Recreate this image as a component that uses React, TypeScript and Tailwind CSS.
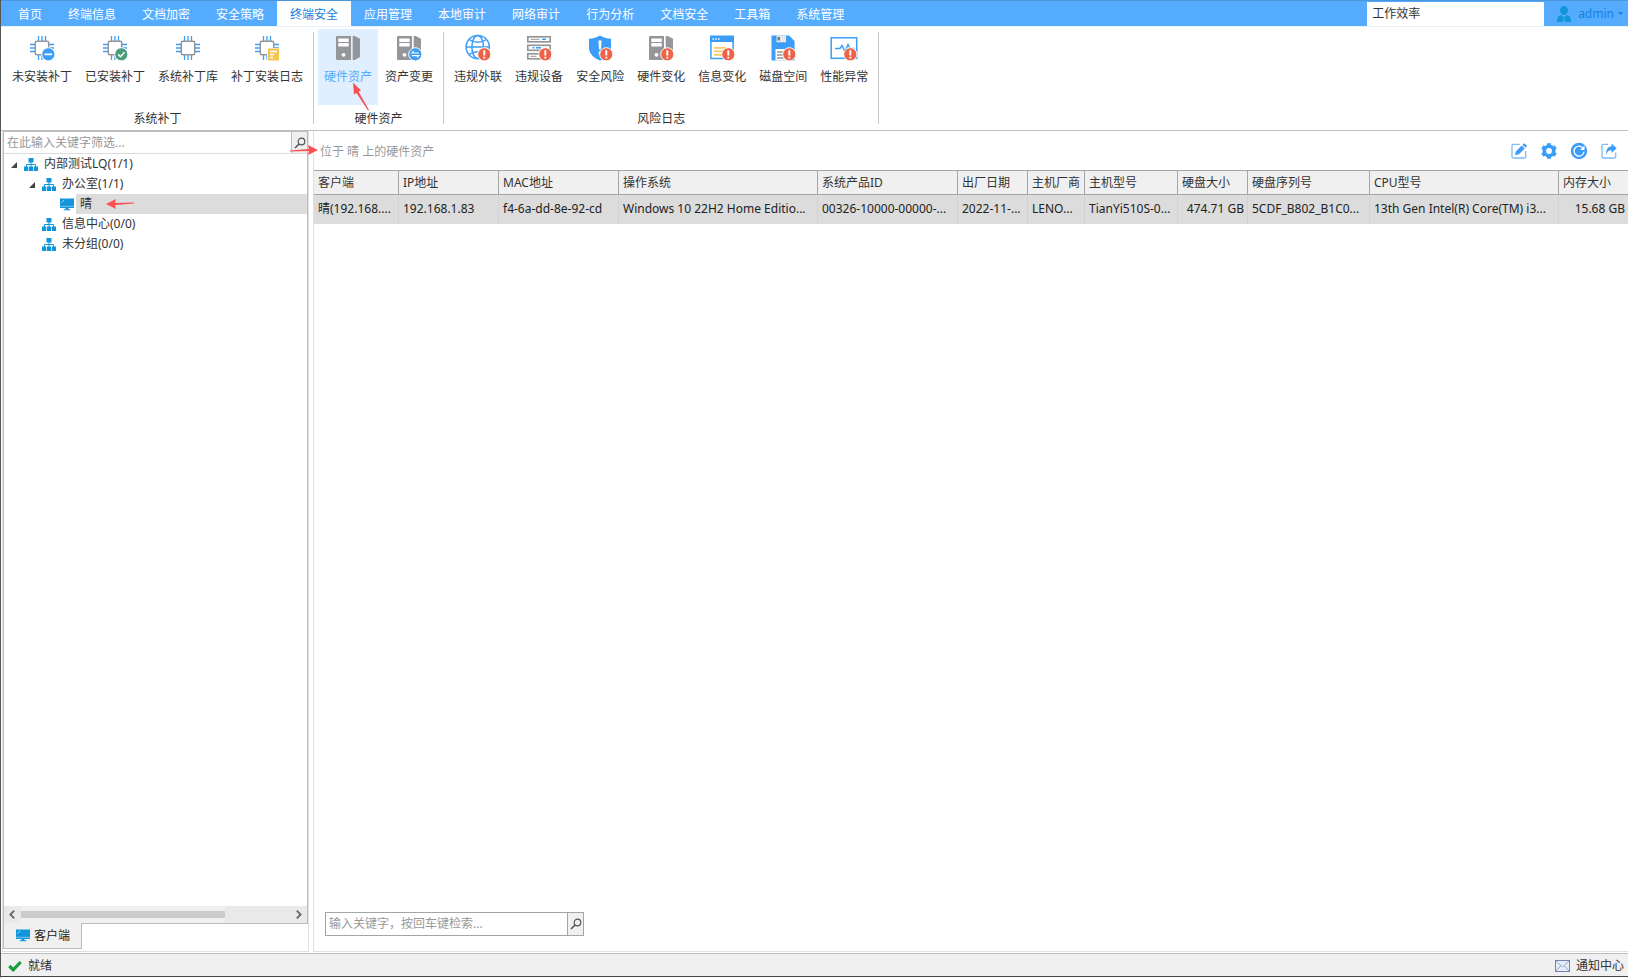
import type { ReactNode } from "react";

const BLUE = "#3b9df8";
const GRAY = "#949699";
const RED = "#ee6348";

type Badge = "minus" | "check" | "note" | "swap" | "alert";

const BadgeMark = ({ kind }: { kind?: Badge }) => {
  if (!kind) return null;

  if (kind === "note") {
    return (
      <g>
        <rect x="12" y="12" width="12" height="12.5" fill="#fff" />
        <rect x="13" y="12.5" width="11" height="12" fill="#f5c451" />
        <path d="M15 15.5h7M15 18.5h4M15 21.5h3" stroke="#fff" strokeWidth="1.3" />
      </g>
    );
  }

  const colors = { minus: BLUE, check: "#4b9c7b", swap: BLUE, alert: RED };

  return (
    <g fill="none" stroke="#fff">
      <circle cx="18.3" cy="18.3" r="6.6" fill={colors[kind]} strokeWidth="1" />
      {kind === "minus" && <path d="M14.5 18.3h7.6" strokeWidth="1.8" />}
      {kind === "check" && <path d="m15.2 18.4 2.3 2.3 4-4.4" strokeWidth="1.5" />}
      {kind === "swap" && (
        <path d="M22 17h-7l1.8-1.8M14.8 19.6h7l-1.8 1.8" strokeWidth="1.2" />
      )}
      {kind === "alert" && (
        <path d="M18.3 14.2v5.2M18.3 20.8v1.8" strokeWidth="1.9" />
      )}
    </g>
  );
};

const RibbonIcon = ({ badge, children }: { badge?: Badge; children: ReactNode }) => (
  <svg className="size-6 overflow-visible" viewBox="0 0 24 24" aria-hidden="true">
    {children}
    <BadgeMark kind={badge} />
  </svg>
);

const Chip = () => (
  <g fill="none">
    <path
      d="M8.5 0v5M12 0v5M15.5 0v5M8.5 19v5M12 19v5M15.5 19v5M0 8.5h5M0 12h5M0 15.5h5M19 8.5h5M19 12h5M19 15.5h5"
      stroke={BLUE}
      strokeWidth="1.3"
    />
    <rect x="5.3" y="5.3" width="13.4" height="13.4" rx="1.5" fill="#fff" stroke={GRAY} strokeWidth="1.5" />
  </g>
);

const Tower = () => (
  <g>
    <path d="M1 0h14v24H1a1 1 0 0 1-1-1V1a1 1 0 0 1 1-1Z" fill={GRAY} />
    <path d="M16.7 0h2L24 2.7V21l-5.3 3h-2Z" fill={GRAY} />
    <path d="M2.3 2.6h10.4v3.3H2.3zM2.3 7h10.4v3.4H2.3z" fill="#fff" />
    <circle cx="7.5" cy="18.8" r="1.9" fill="#fff" />
  </g>
);

const Globe = () => (
  <g fill="none" stroke={BLUE} strokeWidth="1.5">
    <circle cx="11.7" cy="11" r="11.6" />
    <ellipse cx="11.7" cy="11" rx="5.8" ry="11.6" />
    <path d="M.2 11h23M3 3.5c5 3.6 12.5 3.6 17.5 0M3 18.5c5-3.6 12.5-3.6 17.5 0" />
  </g>
);

const Servers = () => (
  <g>
    <g fill="#fff" stroke={GRAY} strokeWidth="1.7">
      <rect x=".8" y=".8" width="22.4" height="5" />
      <rect x=".8" y="9.3" width="22.4" height="5" />
      <rect x=".8" y="17.8" width="22.4" height="5" />
    </g>
    <path d="M15 3.3h4M5.5 11.8h2M9 11.8h5" stroke={BLUE} strokeWidth="1.4" />
    <path d="M3.5 3.3h9M3.5 20.3h6" stroke={GRAY} strokeWidth="1" />
  </g>
);

const Shield = () => (
  <g>
    <path d="M12-.6c3 2 6.5 3.2 11 3.4v9c0 6-5 10.5-11 12.7C6 22.3 1 17.8 1 11.8v-9C5.5 2.6 9 1.4 12-.6Z" fill={BLUE} />
    <path d="M10.4 4.5h3.2l-.6 9h-2zM10.7 15.5h2.6V18h-2.6z" fill="#fff" />
  </g>
);

const InfoWindow = () => (
  <g>
    <path d="M.9 6v16.6h22.2V6" fill="#fff" stroke={BLUE} strokeWidth="1.5" />
    <path d="M0-.5h24V6H0z" fill={BLUE} />
    <path d="M2.5 3H4M5.3 3h1.5M8 3h1.5" stroke="#fff" strokeWidth="1.5" />
    <path d="M4 11.8h12M4 15.3h9M4 18.8h9" stroke="#f8c865" strokeWidth="1.8" />
  </g>
);

const Floppy = () => (
  <g>
    <path d="M.5-.5H18L23.500 5v19.500H.5z" fill={BLUE} />
    <path d="M5.5-.5H15v6.8H5.500z" fill="#e8e9ea" />
    <path d="M6.500 1h2.500v3.500H6.500z" fill="#777" />
    <path d="M4.5 13h15v11.5h-15z" fill="#fff" />
    <path d="M6 16h9M6 19h8M6 22h8" stroke={GRAY} strokeWidth="1.3" />
  </g>
);

const Pulse = () => (
  <g fill="none" stroke={BLUE}>
    <rect x="-.8" y="1.8" width="25.5" height="20.5" strokeWidth="1.5" />
    <path d="M3 12.5h5l2-3 3 6 3-7 2 4h4.500" strokeWidth="1.5" />
  </g>
);

type RibbonItem = { label: string; art: ReactNode; badge?: Badge; active?: boolean };

const ribbonGroups: { name: string; items: RibbonItem[] }[] = [
  {
    name: "系统补丁",
    items: [
      { label: "未安装补丁", art: <Chip />, badge: "minus" },
      { label: "已安装补丁", art: <Chip />, badge: "check" },
      { label: "系统补丁库", art: <Chip /> },
      { label: "补丁安装日志", art: <Chip />, badge: "note" },
    ],
  },
  {
    name: "硬件资产",
    items: [
      { label: "硬件资产", art: <Tower />, active: true },
      { label: "资产变更", art: <Tower />, badge: "swap" },
    ],
  },
  {
    name: "风险日志",
    items: [
      { label: "违规外联", art: <Globe />, badge: "alert" },
      { label: "违规设备", art: <Servers />, badge: "alert" },
      { label: "安全风险", art: <Shield />, badge: "alert" },
      { label: "硬件变化", art: <Tower />, badge: "alert" },
      { label: "信息变化", art: <InfoWindow />, badge: "alert" },
      { label: "磁盘空间", art: <Floppy />, badge: "alert" },
      { label: "性能异常", art: <Pulse />, badge: "alert" },
    ],
  },
];

const menus = [
  "首页",
  "终端信息",
  "文档加密",
  "安全策略",
  "终端安全",
  "应用管理",
  "本地审计",
  "网络审计",
  "行为分析",
  "文档安全",
  "工具箱",
  "系统管理",
];

const TopBar = () => (
  <header className="flex h-[26px] shrink-0 border-t border-[#4a95dc] bg-[#55acff]">
    <nav className="flex pl-1">
      {menus.map((menu) => (
        <button
          key={menu}
          className={
            menu === "终端安全"
              ? "bg-white px-[13px] pt-0.5 text-[#1480e0]"
              : "px-[13px] pt-0.5 text-white"
          }
        >
          {menu}
        </button>
      ))}
    </nav>
    <input
      className="mt-px ml-auto w-[177px] bg-white px-[5px] text-[#333] outline-none"
      aria-label="功能搜索"
      defaultValue="工作效率"
    />
    <button className="flex items-center pr-[5px] pl-[13px] text-[#1480e6]">
      <svg className="mr-[7px] h-4 w-3.5" viewBox="0 0 14 16" fill="#1296db" aria-hidden="true">
        <path d="M7 0c2.4 0 4 1.7 4 4.2S9.2 9 7 9 3 6.7 3 4.2 4.6 0 7 0Z" />
        <path d="M3.5 9 6 10.5V16H1.2C.4 16 0 15.6 0 15c0-3 .8-5 3.5-6ZM10.5 9 8 10.5V16h4.8c.8 0 1.2-.4 1.2-1 0-3-.8-5-3.5-6ZM6.4 10.5h1.2v4L7 15.5l-.6-1z" />
      </svg>
      admin
      <svg className="ml-1 h-[3px] w-[5px]" viewBox="0 0 5 3" aria-hidden="true">
        <path d="M0 0h5L2.5 3z" fill="#1480e6" />
      </svg>
    </button>
  </header>
);

const Ribbon = () => (
  <div className="flex shrink-0 border-y border-t-[#e8f1fa] border-b-[#c0c0c0] bg-white pl-px">
    {ribbonGroups.map((group) => (
      <section key={group.name} className="flex py-0.5">
        <div className="relative flex flex-col px-1">
          <div className="flex h-[76px] gap-px">
            {group.items.map((item) => (
              <button
                key={item.label}
                className={
                  item.active
                    ? "flex flex-col items-center bg-[#e1eefe] px-1.5 pt-[7px] text-[#55acff]"
                    : "flex flex-col items-center px-1.5 pt-[7px]"
                }
              >
                <RibbonIcon badge={item.badge}>{item.art}</RibbonIcon>
                <span className="mt-2 leading-[18px]">{item.label}</span>
              </button>
            ))}
          </div>
          <h2 className="mt-[5px] h-[18px] text-center leading-[18px]">{group.name}</h2>
          {group.name === "硬件资产" && (
            <svg className="absolute top-[52px] left-[35px] h-8 w-5" viewBox="0 0 20 32" aria-hidden="true">
              <path d="M4 1.500 12 9.500 9.500 10.500 20 29 19 29.500 7.500 12 5 13.500z" fill="#fb4f4f" />
            </svg>
          )}
        </div>
        <div className="mt-[3px] mb-1 w-px bg-[#c9c9c9]" />
      </section>
    ))}
  </div>
);

const OrgIcon = () => (
  <svg className="h-[13px] w-3.5" viewBox="0 0 14 13" aria-hidden="true">
    <path d="M7 4v5M2.5 9V6.500h9V9" fill="none" stroke="#1296db" />
    <path d="M4.500 0h5v4.500h-5zM0 8.500h4.200V13H0zM4.900 8.500h4.200V13H4.900zM9.800 8.500H14V13H9.800z" fill="#1296db" />
  </svg>
);

const MonitorIcon = () => (
  <svg className="h-[13px] w-3.5" viewBox="0 0 14 13" aria-hidden="true">
    <path d="M0 .5h14V10H0zM5.500 10h3v1.300h1.800v1H3.700v-1h1.800z" fill="#1296db" />
    <path d="M0 8.300h14" stroke="#8fd0f3" strokeWidth=".8" />
    <path d="m1.300 4.600 3-2.800" stroke="#a8dbf6" strokeWidth=".9" />
  </svg>
);

const SearchIcon = () => (
  <svg className="size-3" viewBox="0 0 12 12" fill="none" stroke="#555" aria-hidden="true">
    <circle cx="7.500" cy="4.500" r="3.300" strokeWidth="1.200" />
    <path d="M5 7 1 11" strokeWidth="1.600" />
  </svg>
);

const ArrowMark = ({ className }: { className: string }) => (
  <svg className={className} viewBox="0 0 28 10" aria-hidden="true">
    <path d="M0 5 10 0 9 3.900 28 3.500v1L9 6.100 10 10z" fill="#fb4f4f" />
  </svg>
);

type TreeNode = { label: string; indent: string; open?: boolean; client?: boolean };

const tree: TreeNode[] = [
  { label: "内部测试LQ(1/1)", indent: "pl-[7px]", open: true },
  { label: "办公室(1/1)", indent: "pl-[25px]", open: true },
  { label: "晴", indent: "pl-[43px]", client: true },
  { label: "信息中心(0/0)", indent: "pl-[25px]" },
  { label: "未分组(0/0)", indent: "pl-[25px]" },
];

const Sidebar = () => (
  <aside className="flex w-[307px] shrink-0 flex-col border border-t-0 border-[#e0e0e0] pb-0.5">
    <div className="flex min-h-0 flex-1 flex-col border border-[#bcbcbc]">
      <div className="flex h-[22px] shrink-0 border-b border-[#dcdcdc]">
        <input
          className="min-w-0 flex-1 px-[3px] placeholder-[#999] outline-none"
          aria-label="筛选"
          placeholder="在此输入关键字筛选..."
        />
        <button
          className="relative flex w-4 items-center justify-center border-l border-[#bcbcbc] bg-[#f0f0f0]"
          aria-label="搜索"
        >
          <SearchIcon />
          <ArrowMark className="absolute top-[13px] -left-0.5 z-10 h-2.5 w-7 rotate-180" />
        </button>
      </div>
      <ul className="flex-1">
        {tree.map((node) => (
          <li key={node.label} className={`flex h-5 items-center ${node.indent}`}>
            <span className="flex w-[13px]">
              {node.open && (
                <svg className="mt-0.5 size-1.5" viewBox="0 0 6 6" aria-hidden="true">
                  <path d="M6 0v6H0z" fill="#444" />
                </svg>
              )}
            </span>
            {node.client ? <MonitorIcon /> : <OrgIcon />}
            <span
              className={
                node.client
                  ? "ml-0.5 flex h-5 flex-1 items-center bg-[#dcdcdc] pl-1"
                  : "ml-0.5 flex h-5 flex-1 items-center pl-1"
              }
            >
              {node.label}
              {node.client && <ArrowMark className="ml-3.5 h-2.5 w-7" />}
            </span>
          </li>
        ))}
      </ul>
      <div className="flex h-[17px] shrink-0 items-center bg-[#e9e9e9]">
        <button className="flex w-[17px] justify-center pr-0.5" aria-label="向左滚动">
          <svg className="h-[9px] w-1.5" viewBox="0 0 6 9" fill="none" stroke="#666" aria-hidden="true">
            <path d="M5.200.7 1.400 4.500l3.800 3.800" strokeWidth="1.800" />
          </svg>
        </button>
        <div className="flex h-full flex-1 items-center">
          <div className="flex h-full w-[76%] items-center bg-[#f0f0f0]">
            <div className="h-[7px] w-full bg-[#cbcbcb]" />
          </div>
        </div>
        <button className="flex w-[17px] justify-center" aria-label="向右滚动">
          <svg className="h-[9px] w-1.5" viewBox="0 0 6 9" fill="none" stroke="#666" aria-hidden="true">
            <path d="M.8.7 4.600 4.500.8 8.300" strokeWidth="1.800" />
          </svg>
        </button>
      </div>
    </div>
    <button className="-mt-px flex h-[26px] w-[79px] shrink-0 items-center gap-1 border border-t-0 border-[#bcbcbc] bg-[#f0f0f0] pl-3 text-[#222]">
      <MonitorIcon />
      客户端
    </button>
  </aside>
);

const columns = [
  { title: "客户端", value: "晴(192.168....", width: "w-[85px]" },
  { title: "IP地址", value: "192.168.1.83", width: "w-[100px]" },
  { title: "MAC地址", value: "f4-6a-dd-8e-92-cd", width: "w-[120px]" },
  { title: "操作系统", value: "Windows 10 22H2 Home Editio...", width: "w-[199px]" },
  { title: "系统产品ID", value: "00326-10000-00000-...", width: "w-[140px]" },
  { title: "出厂日期", value: "2022-11-...", width: "w-[70px]" },
  { title: "主机厂商", value: "LENO...", width: "w-[57px]" },
  { title: "主机型号", value: "TianYi510S-0...", width: "w-[93px]" },
  { title: "硬盘大小", value: "474.71 GB", width: "w-[70px]", right: true },
  { title: "硬盘序列号", value: "5CDF_B802_B1C0...", width: "w-[122px]" },
  { title: "CPU型号", value: "13th Gen Intel(R) Core(TM) i3...", width: "w-[189px]" },
  { title: "内存大小", value: "15.68 GB", width: "", right: true },
];

const AssetTable = () => (
  <table className="w-full table-fixed border-separate border-spacing-0 whitespace-nowrap">
    <colgroup>
      {columns.map((column) => (
        <col key={column.title} className={column.width} />
      ))}
    </colgroup>
    <thead>
      <tr className="h-[25px] bg-[#f0f0f0]">
        {columns.map((column) => (
          <th
            key={column.title}
            className="overflow-hidden border-y border-r border-[#a5a5a5] py-0 pr-0 pl-1 text-left font-normal last:border-r-0"
          >
            {column.title}
          </th>
        ))}
      </tr>
    </thead>
    <tbody>
      <tr className="h-[29px] bg-[#dcdcdc] text-[#222]">
        {columns.map((column) => (
          <td
            key={column.title}
            className={
              column.right
                ? "overflow-hidden border-r border-[#d2d2d2] pt-0 pr-[3px] pb-0.5 pl-0 text-right last:border-r-0"
                : "overflow-hidden border-r border-[#d2d2d2] pt-0 pr-0 pb-0.5 pl-1"
            }
          >
            {column.value}
          </td>
        ))}
      </tr>
    </tbody>
  </table>
);

const tools = [
  {
    name: "编辑",
    art: (
      <g>
        <path d="M9 1.300H2.200A1.200 1.200 0 0 0 1 2.500v11.300A1.200 1.200 0 0 0 2.200 15h11.300a1.200 1.200 0 0 0 1.200-1.200V8" fill="none" stroke="#7cbcf9" strokeWidth="1.300" />
        <path d="M4 12.300 5 8.200 10.700 2.500l3 3L8 11.300zM11.500 1.700l.9-.9q.8-.6 1.600 0l1.400 1.400q.6.800 0 1.600l-.9.900z" fill={BLUE} />
      </g>
    ),
  },
  {
    name: "设置",
    art: (
      <g>
        <circle cx="8" cy="8" r="4.700" fill="none" stroke={BLUE} strokeWidth="3.600" />
        <path
          d="M8 .2v2.500M8 13.300v2.500M1.300 4.100l2.100 1.200M12.600 10.700l2.100 1.200M1.300 11.900l2.100-1.200M12.600 5.300l2.100-1.200"
          stroke={BLUE}
          strokeWidth="4"
        />
      </g>
    ),
  },
  {
    name: "刷新",
    art: (
      <g>
        <circle cx="8" cy="8" r="8.200" fill={BLUE} />
        <path d="M12.400 5.700A5 5 0 1 0 13 8.700" fill="none" stroke="#fff" strokeWidth="1.300" />
        <path d="M13.500 2.500v4.600H9z" fill="#fff" />
      </g>
    ),
  },
  {
    name: "导出",
    art: (
      <g>
        <path d="M7 1.300H2.200A1.200 1.200 0 0 0 1 2.500v11.300A1.200 1.200 0 0 0 2.200 15h11.300a1.200 1.200 0 0 0 1.200-1.200V9.500" fill="none" stroke="#7cbcf9" strokeWidth="1.300" />
        <path d="M10.500.5 15.700 5.200 10.500 10V7.200C8 7 6.300 8.500 5.200 11.500 5 6.500 7 3.500 10.500 3.300z" fill={BLUE} />
      </g>
    ),
  },
];

const Content = () => (
  <main className="flex min-w-0 flex-1 flex-col border-b border-l border-[#e0e0e0]">
    <div className="flex h-[39px] shrink-0 items-center justify-between pr-[11px] pl-1.5">
      <h1 className="pt-0.5 text-[#999]">位于 晴 上的硬件资产</h1>
      <div className="flex gap-3.5">
        {tools.map((tool) => (
          <button key={tool.name} aria-label={tool.name}>
            <svg className="size-4 overflow-visible" viewBox="0 0 16 16" aria-hidden="true">
              {tool.art}
            </svg>
          </button>
        ))}
      </div>
    </div>
    <div className="flex-1">
      <AssetTable />
    </div>
    <div className="mb-[15px] ml-[11px] flex h-6 w-[259px] shrink-0 border border-[#a5a5a5]">
      <input
        className="min-w-0 flex-1 px-[3px] placeholder-[#999] outline-none"
        aria-label="检索"
        placeholder="输入关键字，按回车键检索..."
      />
      <button
        className="flex w-4 items-center justify-center border-l border-[#a5a5a5] bg-[#f0f0f0]"
        aria-label="检索"
      >
        <SearchIcon />
      </button>
    </div>
  </main>
);

const StatusBar = () => (
  <footer className="mt-px flex h-6 shrink-0 items-center justify-between border-t border-b border-t-[#bcbcbc] border-b-[#444] bg-[#f0f0f0] pt-0.5 pr-1 pl-[7px]">
    <span className="flex items-center gap-1.5">
      <svg className="h-3 w-3.5" viewBox="0 0 14 12" aria-hidden="true">
        <path d="m1.300 6 3.900 3.800L12.700 2" fill="none" stroke="#11a03a" strokeWidth="3.200" />
      </svg>
      就绪
    </span>
    <button className="flex items-center gap-1.5">
      <svg className="h-3 w-[15px]" viewBox="0 0 15 12" fill="none" aria-hidden="true">
        <rect x=".5" y=".5" width="14" height="11" fill="#e6ecf8" stroke="#7082b8" />
        <path d="m1 1 6.500 6L14 1M1 11l4.500-5M14 11 9.500 6" stroke="#8c9ccb" strokeWidth=".9" />
      </svg>
      通知中心
    </button>
  </footer>
);

export default function App() {
  return (
    <div className="flex h-screen flex-col overflow-hidden border-b border-l border-b-white border-l-[#555] bg-white font-['Noto_Sans','Noto_Sans_CJK_SC',sans-serif] text-[12px] leading-4 text-[#333]">
      <TopBar />
      <Ribbon />
      <div className="flex min-h-0 flex-1 gap-1 pl-px">
        <Sidebar />
        <Content />
      </div>
      <StatusBar />
    </div>
  );
}
